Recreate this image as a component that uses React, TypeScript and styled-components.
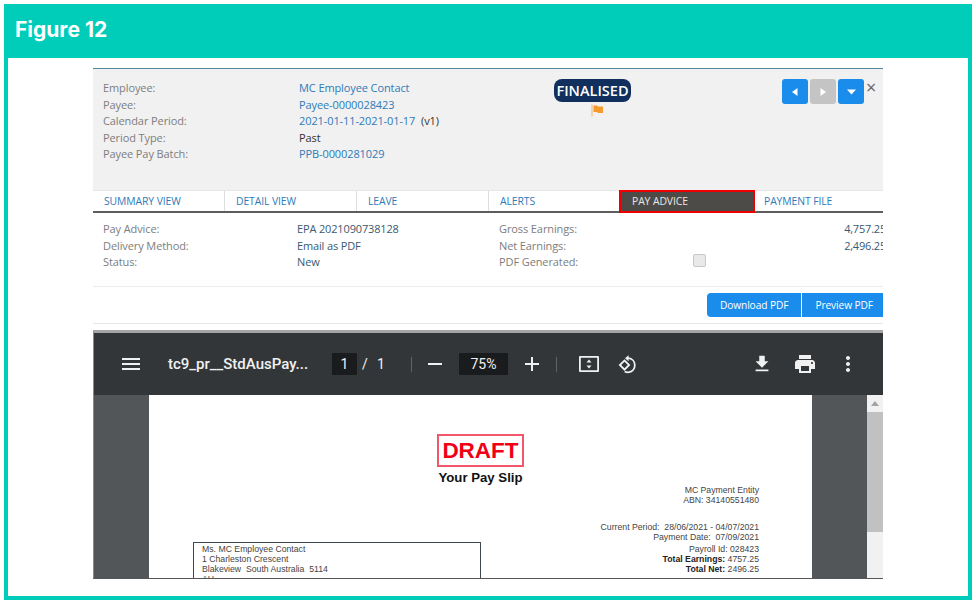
import React from 'react';
import styled, { createGlobalStyle } from 'styled-components';

const GlobalStyle = createGlobalStyle`
  html, body {
    margin: 0;
    padding: 0;
    background: #fff;
    font-family: "Open Sans", "Liberation Sans", sans-serif;
  }
`;

const summaryRows = [
  { label: 'Employee:', value: 'MC Employee Contact', link: true },
  { label: 'Payee:', value: 'Payee-0000028423', link: true },
  { label: 'Calendar Period:', value: '2021-01-11-2021-01-17', link: true, suffix: ' (v1)' },
  { label: 'Period Type:', value: 'Past', link: false },
  { label: 'Payee Pay Batch:', value: 'PPB-0000281029', link: true },
];

const tabs = ['SUMMARY VIEW', 'DETAIL VIEW', 'LEAVE', 'ALERTS', 'PAY ADVICE', 'PAYMENT FILE'];

const App: React.FC = () => {
  return (
    <>
      <GlobalStyle />
      <Frame>
        <FrameTitle>Figure 12</FrameTitle>
        <FrameBody>
          <Panel>
            <SummaryHeader>
              <SummaryGrid>
                {summaryRows.map((row) => (
                  <React.Fragment key={row.label}>
                    <Label>{row.label}</Label>
                    <Value $link={row.link}>
                      {row.value}
                      {row.suffix && <Suffix>{row.suffix}</Suffix>}
                    </Value>
                  </React.Fragment>
                ))}
              </SummaryGrid>
              <StatusBlock>
                <StatusPill>FINALISED</StatusPill>
                <FlagIcon width="13" height="13" viewBox="0 0 13 13">
                  <rect x="0.5" y="0.5" width="1" height="12" fill="#f8b470" />
                  <path d="M2.5 1.5h3.5l1 1h5v6.5H7L6 8H2.5z" fill="#f59a2c" />
                </FlagIcon>
              </StatusBlock>
              <NavGroup>
                <NavButton>
                  <svg width="6" height="8" viewBox="0 0 6 8"><path d="M5.5 0v8L0 4z" fill="#fff" /></svg>
                </NavButton>
                <NavButton $disabled>
                  <svg width="6" height="8" viewBox="0 0 6 8"><path d="M.5 0v8L6 4z" fill="#fff" /></svg>
                </NavButton>
                <NavButton>
                  <svg width="9" height="6" viewBox="0 0 9 6"><path d="M0 .5h9L4.5 5.5z" fill="#fff" /></svg>
                </NavButton>
              </NavGroup>
              <CloseMark>×</CloseMark>
            </SummaryHeader>

            <TabBar>
              {tabs.map((tab) => (
                <Tab key={tab} $active={tab === 'PAY ADVICE'}>{tab}</Tab>
              ))}
            </TabBar>

            <DetailSection>
              <DetailGrid>
                <Label>Pay Advice:</Label>
                <DetailValue>EPA 2021090738128</DetailValue>
                <Label>Gross Earnings:</Label>
                <Amount>4,757.25</Amount>
                <Label>Delivery Method:</Label>
                <DetailValue>Email as PDF</DetailValue>
                <Label>Net Earnings:</Label>
                <Amount>2,496.25</Amount>
                <Label>Status:</Label>
                <DetailValue>New</DetailValue>
                <Label>PDF Generated:</Label>
                <CheckCell><FakeCheckbox /></CheckCell>
              </DetailGrid>
            </DetailSection>

            <ActionBar>
              <ActionButton $first>Download PDF</ActionButton>
              <ActionButton>Preview PDF</ActionButton>
            </ActionBar>

            <Viewer>
              <ViewerToolbar>
                <ToolIcon $size={24} $left={25}>
                  <path d="M3 18h18v-2H3v2zm0-5h18v-2H3v2zm0-7v2h18V6H3z" />
                </ToolIcon>
                <DocTitle>tc9_pr__StdAusPay...</DocTitle>
                <PageBox>1</PageBox>
                <PageText>/</PageText>
                <PageText>1</PageText>
                <ToolDivider $left={24} />
                <ToolIcon $size={24} $left={11}>
                  <path d="M19 13H5v-2h14v2z" />
                </ToolIcon>
                <ZoomBox>75%</ZoomBox>
                <ToolIcon $size={24} $left={12}>
                  <path d="M19 13h-6v6h-2v-6H5v-2h6V5h2v6h6v2z" />
                </ToolIcon>
                <ToolDivider $left={12} />
                <ToolIcon $size={24} $left={20}>
                  <path fillRule="evenodd" d="M3 4h18a1 1 0 0 1 1 1v14a1 1 0 0 1-1 1H3a1 1 0 0 1-1-1V5a1 1 0 0 1 1-1zm.8 1.8v12.4h16.4V5.8z" />
                  <path d="M12 7.4l2.5 3h-5zM12 16.6l-2.5-3h5z" />
                </ToolIcon>
                <ToolIcon $size={24} $left={15}>
                  <path fillRule="evenodd" d="M8.5 7.2L2.6 13l5.9 5.9 5.9-5.9zM5.2 13l3.3-3.3 3.3 3.3-3.3 3.3z" />
                  <path d="M12.6 3.2v2.1a8 8 0 0 1 .6 15.8 8 8 0 0 1-5-.9l1-1.5a6.2 6.2 0 0 0 3.8.6 6.2 6.2 0 0 0-.4-12.2v2.2L9 6.2z" />
                </ToolIcon>
                <RightTools>
                  <ToolIcon $size={22}>
                    <path d="M19 9h-4V3H9v6H5l7 7 7-7zM5 18v2h14v-2H5z" />
                  </ToolIcon>
                  <ToolIcon $size={24} $left={20}>
                    <path d="M19 8H5c-1.66 0-3 1.34-3 3v6h4v4h12v-4h4v-6c0-1.66-1.34-3-3-3zm-3 11H8v-5h8v5zm3-7c-.55 0-1-.45-1-1s.45-1 1-1 1 .45 1 1-.45 1-1 1zm-1-9H6v4h12V3z" />
                  </ToolIcon>
                  <ToolIcon $size={24} $left={19}>
                    <path d="M12 8c1.1 0 2-.9 2-2s-.9-2-2-2-2 .9-2 2 .9 2 2 2zm0 2c-1.1 0-2 .9-2 2s.9 2 2 2 2-.9 2-2-.9-2-2-2zm0 6c-1.1 0-2 .9-2 2s.9 2 2 2 2-.9 2-2-.9-2-2-2z" />
                  </ToolIcon>
                </RightTools>
              </ViewerToolbar>
              <ViewerBody>
                <PdfPage>
                  <DraftStamp>DRAFT</DraftStamp>
                  <SlipTitle>Your Pay Slip</SlipTitle>
                  <PdfColumns>
                    <AddressBox>
                      <div>Ms. MC Employee Contact</div>
                      <div>1 Charleston Crescent</div>
                      <div>Blakeview&nbsp; South Australia&nbsp; 5114</div>
                      <div>AU</div>
                    </AddressBox>
                    <EntityInfo>
                      <div>MC Payment Entity</div>
                      <div>ABN: 34140551480</div>
                      <PeriodInfo>
                        <div>Current Period:&nbsp; 28/06/2021 - 04/07/2021</div>
                        <div>Payment Date:&nbsp; 07/09/2021</div>
                        <PayrollLine>Payroll Id: 028423</PayrollLine>
                        <div><strong>Total Earnings:</strong> 4757.25</div>
                        <div><strong>Total Net:</strong> 2496.25</div>
                      </PeriodInfo>
                    </EntityInfo>
                  </PdfColumns>
                </PdfPage>
                <Scrollbar>
                  <ScrollArrow />
                  <ScrollThumb />
                </Scrollbar>
              </ViewerBody>
            </Viewer>
          </Panel>
        </FrameBody>
      </Frame>
    </>
  );
};

const ToolIcon: React.FC<{ $size: number; $left?: number; children: React.ReactNode }> = ({ $size, $left, children }) => (
  <IconSvg viewBox="0 0 24 24" width={$size} height={$size} $left={$left ?? 0} fill="#f1f1f1">
    {children}
  </IconSvg>
);

const Frame = styled.div`
  box-sizing: border-box;
  width: 968px;
  height: 596px;
  margin: 4px;
  display: flex;
  flex-direction: column;
  background: #00cdb9;
`;

const FrameTitle = styled.div`
  height: 54px;
  flex: none;
  padding: 13px 0 0 11px;
  box-sizing: border-box;
  font-family: Inter, "Open Sans", sans-serif;
  font-size: 21px;
  line-height: 26px;
  font-weight: 700;
  color: #fff;
`;

const FrameBody = styled.div`
  flex: 1;
  margin: 0 4px 4px;
  background: #fff;
  padding: 10px 85px 0;
  min-height: 0;
`;

const Panel = styled.div`
  width: 790px;
  height: 520px;
  overflow: hidden;
  font-size: 11px;
  letter-spacing: -0.1px;
  color: #333;
`;

const SummaryHeader = styled.div`
  height: 121px;
  display: flex;
  align-items: flex-start;
  background: #f1f1f1;
  border-top: 1px solid #4f8c9c;
  padding-left: 10px;
`;

const SummaryGrid = styled.div`
  width: 451px;
  flex: none;
  margin-top: 11px;
  display: grid;
  grid-template-columns: 196px 1fr;
  grid-auto-rows: 16.5px;
  line-height: 16.5px;
`;

const Label = styled.div`
  color: #7d7d7d;
`;

const Value = styled.div<{ $link?: boolean }>`
  color: ${(p) => (p.$link ? '#2f7bb8' : '#333')};
`;

const Suffix = styled.span`
  color: #333;
  margin-left: 3px;
`;

const StatusBlock = styled.div`
  width: 77px;
  flex: none;
  margin-top: 10px;
  display: flex;
  flex-direction: column;
  align-items: center;
  gap: 2px;
`;

const StatusPill = styled.div`
  width: 100%;
  height: 23px;
  border-radius: 8px;
  background: #12305e;
  color: #fff;
  font-size: 14.5px;
  font-weight: 600;
  letter-spacing: 0;
  line-height: 23px;
  text-align: center;
`;

const FlagIcon = styled.svg`
  margin-left: 10px;
`;

const NavGroup = styled.div`
  margin: 10px 0 0 151px;
  display: flex;
  gap: 2px;
`;

const NavButton = styled.div<{ $disabled?: boolean }>`
  width: 26px;
  height: 25px;
  border-radius: 3px;
  background: ${(p) => (p.$disabled ? '#c4c4c4' : '#1a8cec')};
  display: flex;
  align-items: center;
  justify-content: center;
`;

const CloseMark = styled.div`
  margin: 8px 0 0 2px;
  font-size: 18px;
  line-height: 20px;
  color: #666;
`;

const TabBar = styled.div`
  display: flex;
  height: 23px;
  box-sizing: border-box;
  background: #fff;
  border-top: 1px solid #e6e6e6;
  border-bottom: 2px solid #5d5d5d;
`;

const Tab = styled.div<{ $active?: boolean }>`
  flex: none;
  box-sizing: border-box;
  width: ${(p) => (p.$active ? '136px' : '132px')};
  margin-left: ${(p) => (p.$active ? '-2px' : '0')};
  margin-top: ${(p) => (p.$active ? '-1px' : '0')};
  height: ${(p) => (p.$active ? '23px' : '20px')};
  padding-left: 11px;
  font-size: 10.4px;
  line-height: ${(p) => (p.$active ? '19px' : '20px')};
  color: ${(p) => (p.$active ? '#e8e8e8' : '#2f7bb8')};
  background: ${(p) => (p.$active ? '#4d4b47' : 'transparent')};
  border: ${(p) => (p.$active ? '2px solid #ee0000' : 'none')};
  border-right: ${(p) => (p.$active ? '2px solid #ee0000' : '1px solid #dedede')};

  &:last-child {
    border-right: none;
    padding-left: 9px;
  }
`;

const DetailSection = styled.div`
  height: 74px;
  box-sizing: border-box;
  padding: 8px 0 0 10px;
  border-bottom: 1px solid #ececec;
`;

const DetailGrid = styled.div`
  display: grid;
  grid-template-columns: 194px 202px 194px 1fr;
  grid-auto-rows: 16.5px;
  line-height: 16.5px;
  width: 783px;
`;

const DetailValue = styled.div`
  color: #3a5a70;
  letter-spacing: -0.15px;
`;

const Amount = styled.div`
  color: #3a5a70;
  letter-spacing: -0.2px;
  text-align: right;
`;

const CheckCell = styled.div`
  display: flex;
  align-items: center;
`;

const FakeCheckbox = styled.div`
  width: 13px;
  height: 13px;
  box-sizing: border-box;
  margin-top: -3px;
  background: #e9e9e9;
  border: 1px solid #c8c8c8;
  border-radius: 2px;
`;

const ActionBar = styled.div`
  height: 37px;
  box-sizing: border-box;
  display: flex;
  justify-content: flex-end;
  gap: 1px;
  padding-top: 6px;
  margin-right: -3px;
  border-bottom: 1px solid #e6e6e6;
`;

const ActionButton = styled.div<{ $first?: boolean }>`
  height: 24px;
  line-height: 24px;
  padding: 0 13px;
  font-size: 10.2px;
  background: #1a8cec;
  color: #fff;
  border-radius: ${(p) => (p.$first ? '4px 0 0 4px' : '0')};
`;

const Viewer = styled.div`
  margin-top: 6px;
  height: 249px;
  box-sizing: border-box;
  display: flex;
  flex-direction: column;
  overflow: hidden;
  background: #525659;
  border-top: 3px solid #a6a6a6;
  border-left: 1px solid #8a8a8a;
  border-bottom: 1px solid #555;
  letter-spacing: 0;
`;

const ViewerToolbar = styled.div`
  height: 62px;
  flex: none;
  display: flex;
  align-items: center;
  background: #323639;
  color: #f1f1f1;
  font-family: Roboto, "Open Sans", sans-serif;
`;

const IconSvg = styled.svg<{ $left: number }>`
  flex: none;
  margin-left: ${(p) => p.$left}px;
`;

const DocTitle = styled.div`
  margin-left: 25px;
  width: 164px;
  flex: none;
  font-size: 15px;
  font-weight: 500;
  white-space: nowrap;
`;

const PageBox = styled.div`
  width: 25px;
  height: 22px;
  line-height: 22px;
  text-align: center;
  background: #191b1c;
  font-size: 14px;
  flex: none;
`;

const PageText = styled.div`
  margin-left: 5px;
  width: 10px;
  font-size: 14px;
`;

const ToolDivider = styled.div<{ $left: number }>`
  width: 1px;
  height: 15px;
  margin-left: ${(p) => p.$left}px;
  background: #5f6368;
  flex: none;
`;

const ZoomBox = styled.div`
  width: 49px;
  height: 22px;
  margin-left: 12px;
  line-height: 22px;
  text-align: center;
  background: #191b1c;
  font-size: 14px;
  flex: none;
`;

const RightTools = styled.div`
  margin-left: auto;
  margin-right: 23px;
  display: flex;
  align-items: center;
`;

const ViewerBody = styled.div`
  flex: 1;
  display: flex;
  min-height: 0;
  padding-left: 55px;
`;

const PdfPage = styled.div`
  width: 663px;
  flex: none;
  box-sizing: border-box;
  padding-top: 39px;
  background: #fff;
  display: flex;
  flex-direction: column;
  align-items: center;
  font-family: "Liberation Sans", Arial, sans-serif;
  color: #444;
`;

const DraftStamp = styled.div`
  width: 87px;
  height: 33px;
  box-sizing: border-box;
  border: 2px solid #f2566a;
  color: #f00014;
  font-size: 22.5px;
  font-weight: 700;
  line-height: 30px;
  text-align: center;
`;

const SlipTitle = styled.div`
  margin-top: 3px;
  font-size: 13.2px;
  font-weight: 700;
  line-height: 16px;
  color: #111;
`;

const PdfColumns = styled.div`
  width: 100%;
  box-sizing: border-box;
  padding: 0 53px 0 44px;
  display: flex;
  justify-content: space-between;
  align-items: flex-start;
`;

const AddressBox = styled.div`
  margin-top: 56px;
  width: 288px;
  height: 60px;
  box-sizing: border-box;
  border: 1.5px solid #3b4a50;
  padding: 1px 0 0 8px;
  font-size: 8.7px;
  line-height: 10px;
`;

const EntityInfo = styled.div`
  margin-top: -1px;
  font-size: 8.7px;
  line-height: 10px;
  text-align: right;
`;

const PeriodInfo = styled.div`
  margin-top: 17px;

  strong {
    color: #222;
  }
`;

const PayrollLine = styled.div`
  margin-top: 2px;
`;

const Scrollbar = styled.div`
  margin-left: 55px;
  width: 16px;
  flex: none;
  background: #f1f1f1;
  display: flex;
  flex-direction: column;
`;

const ScrollArrow = styled.div`
  flex: none;
  margin: 6px auto;
  width: 0;
  border-left: 4px solid transparent;
  border-right: 4px solid transparent;
  border-bottom: 5px solid #a3a3a3;
`;

const ScrollThumb = styled.div`
  height: 120px;
  background: #c1c1c1;
`;

export default App;
